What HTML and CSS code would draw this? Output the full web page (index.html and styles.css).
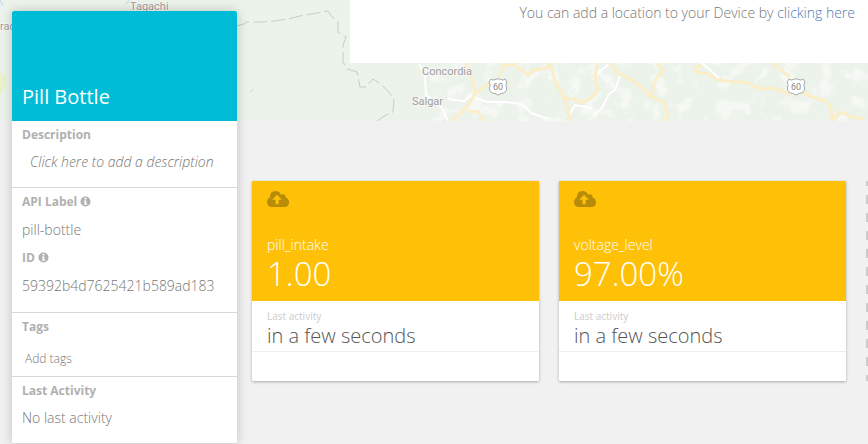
FILE: index.html
```html
<!DOCTYPE html>
<html lang="en">
<head>
    <meta charset="UTF-8">
    <title>Pill Bottle</title>
    <link rel="stylesheet" href="styles.css">
</head>
<body>
    <svg class="symbols" aria-hidden="true">
        <symbol id="cloud" viewBox="0 0 22 16">
            <path fill-rule="evenodd" d="M5 16 Q0 16 0 11 Q0 7.8 3 6.3 Q2.8 0 8.7 0 Q12.5 0 14 3.7 Q18.5 2 18.7 6.8 Q22 7.7 22 11.3 Q22 16 17.3 16 Z M10 3.7 L5.3 8.7 H8.5 V13.3 H11.7 V8.7 H14.8 Z"/>
        </symbol>
        <symbol id="info" viewBox="0 0 12 12">
            <path fill-rule="evenodd" d="M6 0.5 A5.5 5.5 0 1 1 6 11.5 A5.5 5.5 0 1 1 6 0.5 Z M5 2 V3.8 H7 V2 Z M4.2 4.8 V6 H5 V8.4 H4.2 V9.6 H7.8 V8.4 H7 V4.8 Z"/>
        </symbol>
        <symbol id="shield" viewBox="0 0 20 18">
            <path d="M3 1 Q5 3 7 1.5 Q10 0 13 1.5 Q15 3 17 1 L19 4 Q17 6 18.5 10 Q19 15 13 15.5 L10 17 L7 15.5 Q1 15 1.500 10 Q3 6 1 4 Z" fill="#fff" stroke="#aaa"/>
        </symbol>
    </svg>

    <div class="page">
        <div class="map">
            <svg class="map-image" viewBox="0 0 868 121" preserveAspectRatio="xMinYMin slice" aria-hidden="true">
                <defs>
                    <filter id="terrain" x="0" y="0" width="100%" height="100%">
                        <feTurbulence type="fractalNoise" baseFrequency="0.06" numOctaves="4" seed="8"/>
                        <feColorMatrix values="0 0 0 0 0.97  0 0 0 0 0.97  0 0 0 0 0.96  6 0 0 0 -3.1"/>
                    </filter>
                    <filter id="relief" x="0" y="0" width="100%" height="100%">
                        <feTurbulence type="fractalNoise" baseFrequency="0.07" numOctaves="2" seed="3"/>
                        <feColorMatrix values="0 0 0 0 0.84  0 0 0 0 0.87  0 0 0 0 0.83  3 0 0 0 -1.6"/>
                    </filter>
                </defs>
                <rect width="868" height="121" fill="#ebf3ea"/>
                <rect x="290" width="578" height="121" filter="url(#relief)" opacity="0.4"/>
                <rect x="430" y="60" width="438" height="61" filter="url(#terrain)" opacity="0.6"/>
                <path d="M0 73 Q8 76 6 84 L0 96 Z" fill="#e8f3cc"/>
                <path d="M0 0 L3 6 M129 0 L126 4 M250 92 L253 89" class="water"/>
                <path d="M236 26 L244 24 L247 22 Q275 23 300 16 L328 11 L332 17 L338 21 V32 L346 37 L343 45 V62 L347 69 L357 72 L360 87 H366 L373 79 L382 85 L394 98 L393 112 L386 115 L377 121" class="border"/>
                <path d="M419 64 L425 75 L426 95 L435 101 L442 108 L448 121 M447 99 L464 101 L470 96 L487 102 L505 102 L522 104 L531 113 L548 119 M568 117 L575 105 L592 108 M593 79 L600 71 L608 65 M620 76 L615 90 L609 94 L602 108 L594 115 M702 63 L719 78" class="trail"/>
                <g class="road-edge">
                    <path id="roads" d="M452 121 L466 108 L475 94 L486 85 L498 79 M466 63 L472 78 L475 94 M467 111 L478 112 L484 121 M499 77 L503 66 L513 64 L523 71 L528 75 L534 70 L547 68 L550 63 L556 84 L563 95 L568 110 L570 121 M563 98 L574 99 L583 103 L592 97 L598 90 L595 80 L597 63 M610 63 L619 74 L631 79 L640 86 L650 96 L664 102 L668 116 L663 121 M650 96 L656 79 L663 71 L657 63 M702 65 L695 68 L696 72 L708 74 L718 80 L732 82 L746 82 L760 89 L774 88 L789 94 L797 90 L815 98 L826 101 L831 107 L832 120 L842 112 L851 117 L864 119 M773 63 L781 70 L790 77"/>
                </g>
                <use href="#roads" class="road"/>
                <use href="#shield" x="488" y="78" width="20" height="18"/>
                <use href="#shield" x="786" y="78" width="20" height="18"/>
                <g class="places">
                    <text x="130" y="10">Tagachi</text>
                    <text x="0" y="30">rac</text>
                    <text x="422" y="75">Concordia</text>
                    <text x="412" y="105">Salgar</text>
                </g>
                <g class="route-numbers">
                    <text x="498" y="90">60</text>
                    <text x="796" y="90">60</text>
                </g>
            </svg>
            <p class="location">You can add a location to your Device by <a href="#">clicking here</a></p>
        </div>

        <aside class="device">
            <header class="device-header">
                <h1>Pill Bottle</h1>
            </header>
            <section>
                <h2>Description</h2>
                <button type="button" class="description">Click here to add a description</button>
            </section>
            <section class="identity">
                <h2>API Label <svg class="info"><use href="#info"/></svg></h2>
                <p>pill-bottle</p>
                <h2>ID <svg class="info"><use href="#info"/></svg></h2>
                <p>59392b4d7625421b589ad183</p>
            </section>
            <section class="tags">
                <h2><label for="tags">Tags</label></h2>
                <input type="text" id="tags" placeholder="Add tags">
            </section>
            <section>
                <h2>Last Activity</h2>
                <p>No last activity</p>
            </section>
        </aside>

        <main class="variables">
            <article class="card">
                <div class="card-top">
                    <svg class="cloud"><use href="#cloud"/></svg>
                    <h3>pill_intake</h3>
                    <p class="value">1.00</p>
                </div>
                <div class="card-activity">
                    <p class="caption">Last activity</p>
                    <p class="time">in a few seconds</p>
                </div>
            </article>
            <article class="card">
                <div class="card-top">
                    <svg class="cloud"><use href="#cloud"/></svg>
                    <h3>voltage_level</h3>
                    <p class="value">97.00%</p>
                </div>
                <div class="card-activity">
                    <p class="caption">Last activity</p>
                    <p class="time">in a few seconds</p>
                </div>
            </article>
            <div class="card-new"></div>
        </main>
    </div>
</body>
</html>
```

FILE: styles.css
```css
* {
    box-sizing: border-box;
}

body {
    margin: 0;
    background-color: #f1f1f1;
    color: #777;
    font-family: "Open Sans", sans-serif;
    font-size: 14px;
    font-weight: 300;
    line-height: 20px;
}

h1, h2, h3, p {
    margin: 0;
}

.symbols {
    display: none;
}

/* the sidebar overlaps the map, so both share the first row */
.page {
    display: grid;
    grid-template-columns: 12px 225px 15px minmax(0, 1fr);
    grid-template-rows: 121px auto;
    min-height: 100vh;
    overflow: hidden;
}

/* map */
.map {
    grid-column: 1 / -1;
    grid-row: 1;
    position: relative;
    overflow: hidden;
}

.map-image {
    position: absolute;
    width: 100%;
    height: 100%;
}

.border {
    fill: none;
    stroke: #c9cbc9;
    stroke-dasharray: 14 4;
}

.water {
    fill: none;
    stroke: #bcd5f5;
}

.trail {
    fill: none;
    stroke: #fff;
    stroke-width: 2;
}

.road-edge {
    fill: none;
    stroke: #f8ecd0;
    stroke-width: 3;
}

.road {
    fill: none;
    stroke: #fdeec4;
    stroke-width: 2;
}

.places {
    font: 400 11px Roboto, sans-serif;
    fill: #a09d9b;
    stroke: #f7f7f5;
    stroke-width: 2px;
    paint-order: stroke;
}

.route-numbers {
    font: 400 9px Roboto, sans-serif;
    fill: #888;
    text-anchor: middle;
}

.location {
    position: relative;
    margin-left: 350px;
    padding: 3px 13px 40px;
    background-color: #fff;
    text-align: right;
}

.location a {
    color: #4f7bb0;
    text-decoration: none;
}

/* sidebar */
.device {
    grid-column: 2;
    grid-row: 1 / 3;
    z-index: 1;
    margin-top: 11px;
    background-color: #fff;
    border-radius: 2px 2px 0 0;
    box-shadow: 0 0 12px rgba(0, 0, 0, 0.2);
}

.device-header {
    display: flex;
    align-items: flex-end;
    height: 110px;
    padding: 10px;
    background-color: #00bcd7;
    border-radius: 2px 2px 0 0;
}

.device h1 {
    color: #fff;
    font-size: 20px;
    font-weight: 400;
    line-height: 28px;
}

.device section {
    padding: 4px 10px 15px;
    border-bottom: 1px solid #d8d8d8;
}

.device h2 {
    color: #b0b0b0;
    font-size: 12px;
    font-weight: 700;
    line-height: 20px;
}

.device p {
    margin-top: 7px;
}

.identity p,
.identity p + h2 {
    margin-top: 8px;
}

.device .identity {
    padding-bottom: 16px;
}

.info {
    width: 11px;
    height: 11px;
    fill: #b0b0b0;
    vertical-align: -1px;
}

.description {
    display: block;
    margin: 7px 0 0;
    padding: 0 8px;
    border: 0;
    background: none;
    color: inherit;
    font: inherit;
    font-style: italic;
    white-space: nowrap;
    cursor: pointer;
}

.device .tags {
    padding-bottom: 7px;
}

.tags input {
    display: block;
    width: 100%;
    height: 20px;
    margin-top: 12px;
    padding: 0 3px;
    border: 0;
    background: none;
    color: inherit;
    font: inherit;
    font-size: 12px;
}

.tags input::placeholder {
    color: #777;
}

/* variable cards */
.variables {
    grid-column: 4;
    grid-row: 2;
    display: flex;
    align-items: flex-start;
    gap: 20px;
    padding: 60px 0;
}

.card {
    flex: 0 0 287px;
    height: 200px;
    background-color: #fff;
    border-radius: 1px;
    box-shadow: 0 1px 3px rgba(0, 0, 0, 0.3);
}

.card-top {
    height: 120px;
    padding: 10px 15px;
    background-color: #ffc107;
    color: #fff;
}

.cloud {
    display: block;
    width: 22px;
    height: 16px;
    fill: #b88b08;
}

.card h3 {
    margin-top: 28px;
    font-size: 14px;
    font-weight: 300;
    line-height: 20px;
}

.value {
    font-size: 33px;
    line-height: 38px;
}

.card-activity {
    padding: 8px 15px 2px;
    border-bottom: 1px solid #eee;
}

.caption {
    color: #ccc;
    font-size: 10px;
    font-weight: 400;
    line-height: 14px;
}

.time {
    color: #555;
    font-size: 20px;
    line-height: 26px;
}

.card-new {
    flex: 0 0 287px;
    height: 200px;
    background: repeating-linear-gradient(#ccc 0 5px, transparent 5px 14px, #ccc 14px 18px) no-repeat 0 0 / 3px 100%;
}
```
